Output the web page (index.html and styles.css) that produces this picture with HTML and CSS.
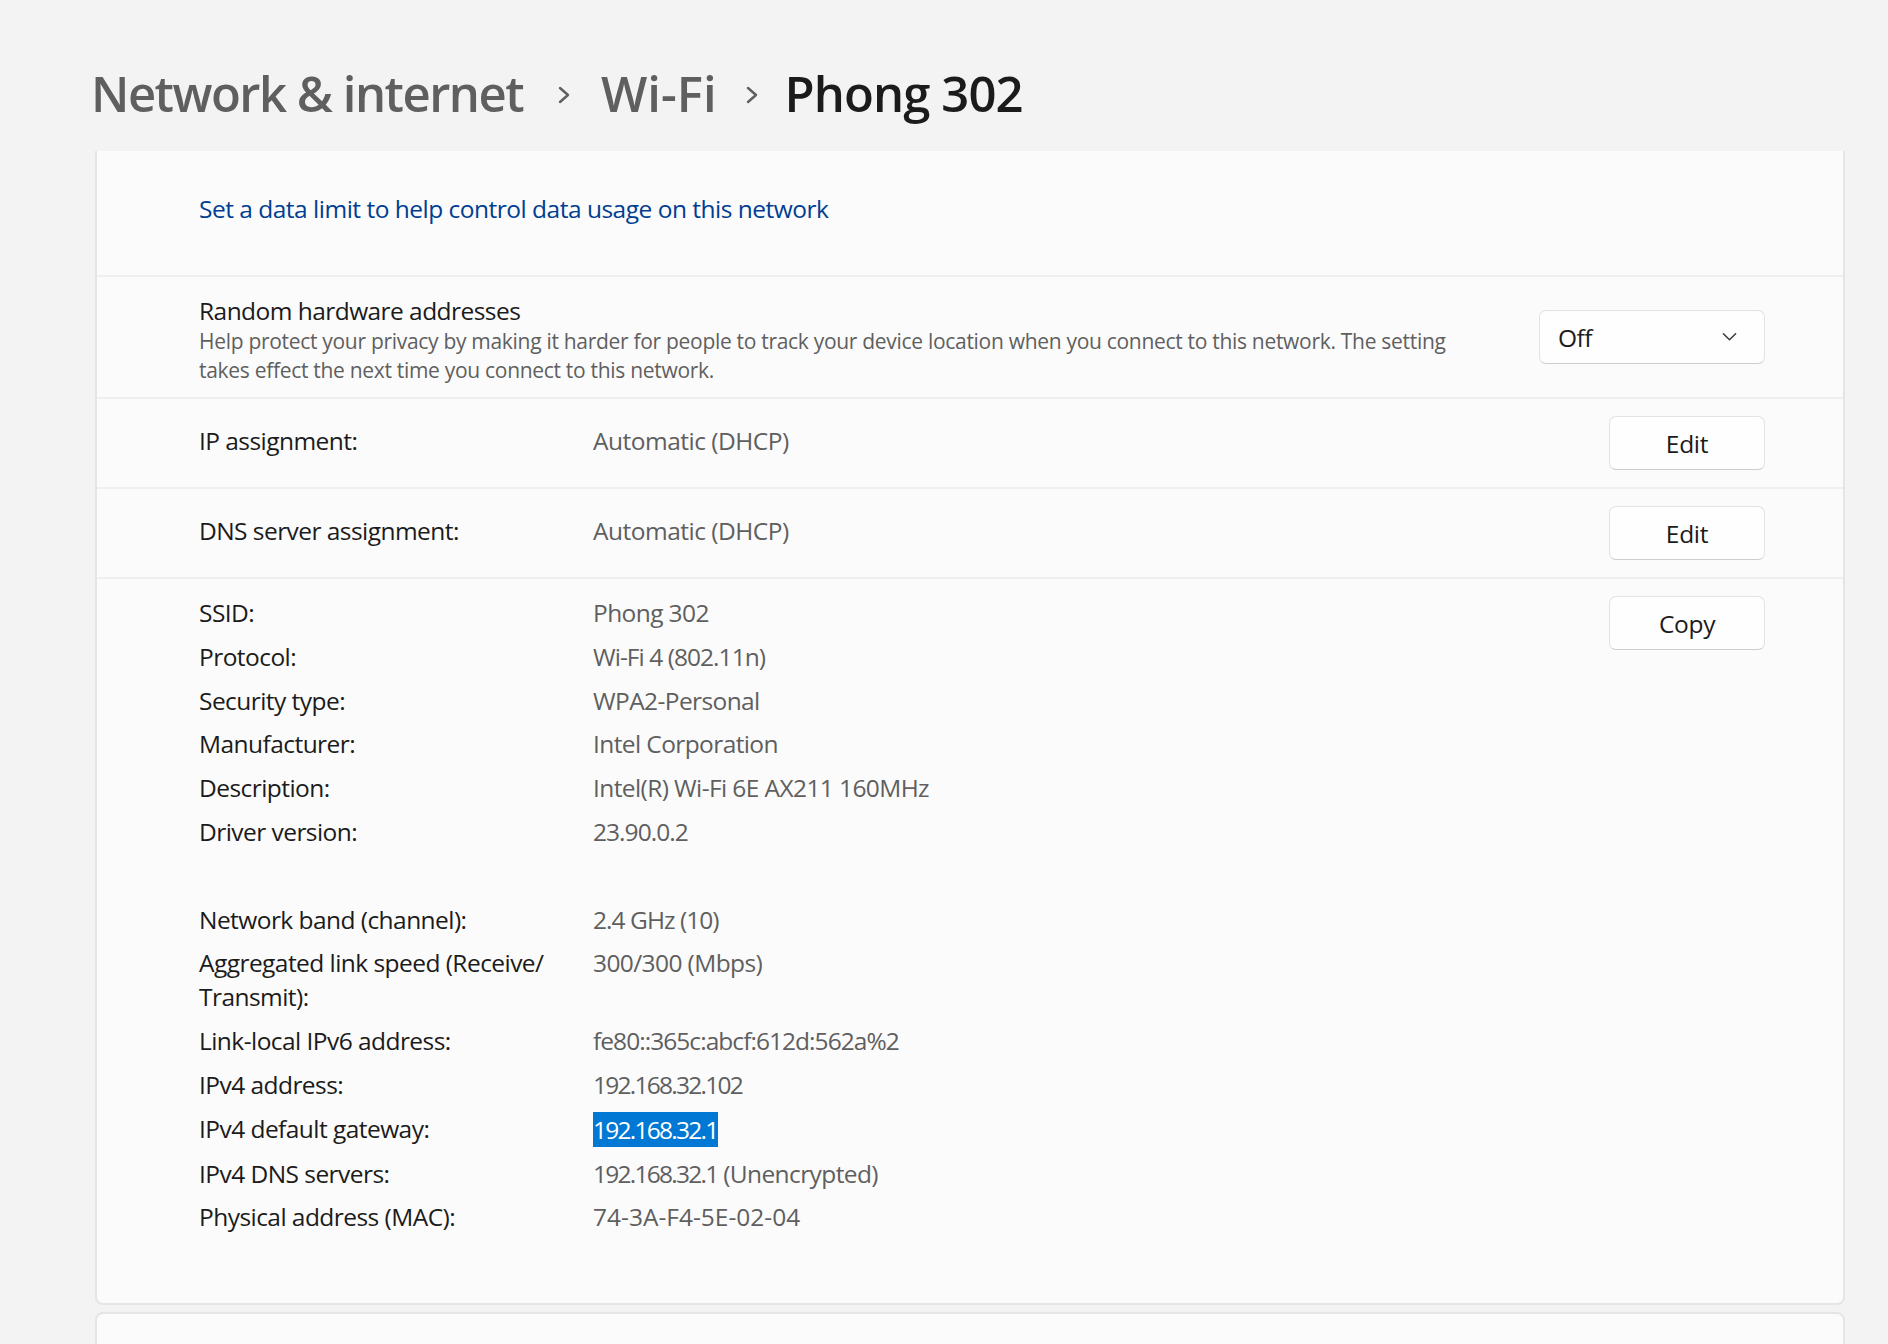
FILE: index.html
```html
<!DOCTYPE html>
<html lang="en">
<head>
<meta charset="utf-8">
<title>Phong 302</title>
<link rel="stylesheet" href="styles.css">
</head>
<body>
<div class="page">
  <header class="breadcrumb">
    <span class="crumb">Network &amp; internet</span>
    <svg class="sep" viewBox="0 0 12 18"><polyline points="2,2 10,9 2,16" fill="none" stroke="#5f5f5f" stroke-width="2.4" stroke-linecap="round" stroke-linejoin="round"/></svg>
    <span class="crumb wifi">Wi-Fi</span>
    <svg class="sep sep-last" viewBox="0 0 12 18"><polyline points="2,2 10,9 2,16" fill="none" stroke="#5f5f5f" stroke-width="2.4" stroke-linecap="round" stroke-linejoin="round"/></svg>
    <span class="crumb current">Phong 302</span>
  </header>

  <section class="card main">
    <div class="row link-row">
      <a class="link" href="#">Set a data limit to help control data usage on this network</a>
    </div>

    <div class="row hw-row">
      <div class="hw-text">
        <div class="hw-title">Random hardware addresses</div>
        <div class="hw-desc">Help protect your privacy by making it harder for people to track your device location when you connect to this network. The setting takes effect the next time you connect to this network.</div>
      </div>
      <div class="select">
        <span>Off</span>
        <svg class="select-chev" viewBox="0 0 16 10"><polyline points="1.5,1.5 8,8 14.5,1.5" fill="none" stroke="#3a3a3a" stroke-width="1.6" stroke-linecap="round" stroke-linejoin="round"/></svg>
      </div>
    </div>

    <div class="row kv-row">
      <div class="kv-label">IP assignment:</div>
      <div class="kv-value">Automatic (DHCP)</div>
      <button class="btn">Edit</button>
    </div>

    <div class="row kv-row">
      <div class="kv-label">DNS server assignment:</div>
      <div class="kv-value">Automatic (DHCP)</div>
      <button class="btn">Edit</button>
    </div>

    <div class="row details">
      <dl class="props">
        <dt>SSID:</dt><dd>Phong 302</dd>
        <dt>Protocol:</dt><dd class="num">Wi-Fi 4 (802.11n)</dd>
        <dt>Security type:</dt><dd>WPA2-Personal</dd>
        <dt>Manufacturer:</dt><dd>Intel Corporation</dd>
        <dt>Description:</dt><dd>Intel(R) Wi-Fi 6E AX211 160MHz</dd>
        <dt>Driver version:</dt><dd class="num">23.90.0.2</dd>
        <dt class="spacer"></dt><dd class="spacer"></dd>
        <dt>Network band (channel):</dt><dd class="num">2.4 GHz (10)</dd>
        <dt>Aggregated link speed (Receive/ Transmit):</dt><dd>300/300 (Mbps)</dd>
        <dt>Link-local IPv6 address:</dt><dd class="num">fe80::365c:abcf:612d:562a%2</dd>
        <dt>IPv4 address:</dt><dd class="ip">192.168.32.102</dd>
        <dt>IPv4 default gateway:</dt><dd class="ip"><span class="selected">192.168.32.1</span></dd>
        <dt>IPv4 DNS servers:</dt><dd><span class="ip">192.168.32.1</span> (Unencrypted)</dd>
        <dt>Physical address (MAC):</dt><dd class="mac">74-3A-F4-5E-02-04</dd>
      </dl>
      <button class="btn">Copy</button>
    </div>
  </section>

  <section class="card next"></section>
</div>
</body>
</html>
```

FILE: styles.css
```css
html, body {
  margin: 0;
  height: 1344px;
  overflow: hidden;
}

body {
  background: #f3f3f3;
  font-family: "Open Sans", "Noto Sans", sans-serif;
  color: #1b1b1b;
}

.page {
  padding: 59px 43px 0 95px;
}

.breadcrumb {
  display: flex;
  align-items: center;
  height: 68px;
  margin: 0 0 24px -4px;
}

.crumb {
  font-size: 49px;
  font-weight: 600;
  line-height: 68px;
  color: #5f5f5f;
  white-space: nowrap;
  letter-spacing: -1.5px;
}

.crumb.wifi {
  letter-spacing: 0;
}

.crumb.current {
  color: #1b1b1b;
  letter-spacing: -0.9px;
}

.sep {
  width: 12px;
  height: 18px;
  margin: 4px 31px 0 35px;
}

.sep.sep-last {
  margin: 4px 27px 0 29px;
}

.card {
  background: #fbfbfb;
  border: 2px solid #e5e5e5;
}

.main {
  border-top: none;
  border-radius: 0 0 8px 8px;
}

.row {
  display: flex;
  align-items: center;
  padding: 0 78px 0 102px;
  border-bottom: 2px solid #efefef;
  box-sizing: content-box;
  font-size: 24.5px;
  letter-spacing: -0.55px;
}

.link-row {
  height: 124px;
}

.link {
  color: #003e92;
  text-decoration: none;
  line-height: 34px;
  margin-top: -9px;
  letter-spacing: -0.5px;
}

.hw-row {
  height: 120px;
}

.hw-text {
  flex: 1;
  max-width: 1270px;
  margin-right: auto;
}

.hw-title {
  line-height: 34px;
  padding-top: 5px;
}

.hw-desc {
  font-size: 21px;
  line-height: 29px;
  margin-top: -1px;
  color: #5f5f5f;
  letter-spacing: -0.3px;
}

.select {
  width: 226px;
  height: 54px;
  box-sizing: border-box;
  display: flex;
  align-items: center;
  justify-content: space-between;
  padding: 0 27px 0 18px;
  background: #fefefe;
  border: 1px solid #e3e3e3;
  border-bottom-color: #cdcdcd;
  border-radius: 7px;
}

.select-chev {
  width: 15px;
  height: 10px;
}

.kv-row {
  height: 88px;
}

.kv-label {
  width: 394px;
  flex: none;
  line-height: 34px;
  margin-top: -5px;
}

.kv-value {
  flex: 1;
  line-height: 34px;
  color: #5f5f5f;
  margin-top: -5px;
  letter-spacing: -0.5px;
}

.btn {
  width: 156px;
  height: 54px;
  flex: none;
  padding: 0;
  font-family: inherit;
  font-size: 24.5px;
  letter-spacing: -0.3px;
  color: #1b1b1b;
  background: #fefefe;
  border: 1px solid #e3e3e3;
  border-bottom-color: #cdcdcd;
  border-radius: 7px;
}

.details {
  height: 707px;
  padding-top: 17px;
  align-items: flex-start;
  border-bottom: none;
}

.props {
  flex: 1;
  margin: 0;
  display: grid;
  grid-template-columns: 374px 1fr;
  column-gap: 20px;
  row-gap: 9.8px;
  align-content: start;
  line-height: 34px;
}

.props dt {
  margin: 0;
}

.props dd {
  margin: 0;
  color: #5f5f5f;
  letter-spacing: -0.6px;
}

.props .num {
  letter-spacing: -0.95px;
}

.props .ip {
  letter-spacing: -1.75px;
}

.props .mac {
  letter-spacing: 0;
}

.props .spacer {
  height: 34px;
}

.selected {
  display: inline-block;
  background: #0078d4;
  color: #ffffff;
  line-height: 35px;
  padding-right: 1px;
}

.next {
  margin-top: 7px;
  height: 40px;
  border-bottom: none;
  border-radius: 8px 8px 0 0;
}
```
